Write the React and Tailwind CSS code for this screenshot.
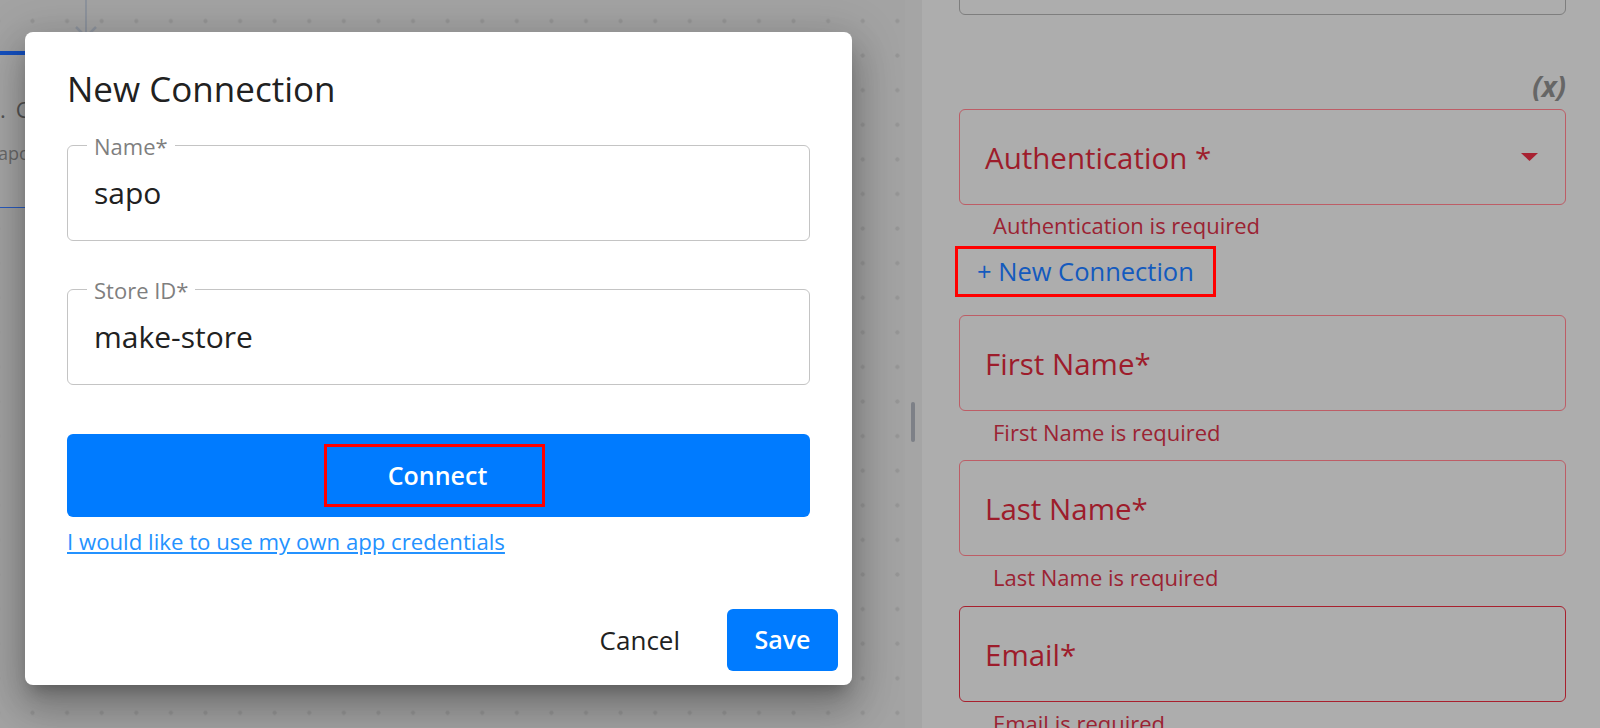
import React from 'react';

const dots =
    'bg-[radial-gradient(circle,#959595_1.8px,transparent_2.4px)] bg-[length:34.6px_34.6px] bg-[position:15.2px_3.7px]';

const OutlinedField = ({ label, value, className = '' }) => (
    <div className={`relative h-[96px] border border-[#c4c4c4] rounded-[6px] flex items-center pl-[26px] ${className}`}>
        <span className="absolute left-[19px] -top-[14px] px-[7px] bg-white text-[22px] leading-[28px] text-[#7f7f7f]">
            {label}
        </span>
        <span className="text-[30px] leading-[40px] text-[#212121]">{value}</span>
    </div>
);

const ErrorField = ({ label, select, className = '', border = 'border-[#bd5d66]' }) => (
    <div className={`h-[96px] border ${border} rounded-[6px] flex items-center justify-between pl-[25px] pr-[27px] pt-[2px] ${className}`}>
        <span className="text-[29.5px] leading-[38px] text-[#9d1c2b]">{label}</span>
        {select && (
            <svg width="17" height="8" viewBox="0 0 17 8" className="-mt-[2px]">
                <polygon points="0,0 17,0 8.5,8" fill="#a82232" />
            </svg>
        )}
    </div>
);

const Helper = ({ children, className = '' }) => (
    <p className={`pl-[34px] text-[22px] leading-[30px] text-[#9b2333] ${className}`}>{children}</p>
);

export default function App() {
    return (
        <div className="relative w-[1600px] h-[728px] overflow-hidden flex font-['Open_Sans',sans-serif]">
            {/* canvas */}
            <div className={`relative w-[905px] h-full bg-[#a3a3a3] ${dots}`}>
                <svg width="24" height="56" viewBox="0 0 24 56" className="absolute left-[74px] top-0">
                    <line x1="12" y1="0" x2="12" y2="48" stroke="#8d939c" strokeWidth="2" />
                    <polyline points="2,27 12,37 22,27" fill="none" stroke="#8d939c" strokeWidth="2.5" />
                </svg>
                <div className="absolute left-[-200px] top-[51px] w-[232px] h-[157px] overflow-hidden bg-[#a7a7a7] border-t-[4px] border-t-[#1450c0] border-b border-b-[#2a5cc0] pl-[187.5px] pt-[39px]">
                    <div className="text-[22px] leading-[30px] text-[#555] whitespace-nowrap">
                        <span>1.</span>
                        <span className="ml-[10px]">C</span>
                    </div>
                    <div className="mt-[17px] ml-[2px] text-[18px] leading-[24px] text-[#6a6a6a] whitespace-nowrap">sapo</div>
                </div>
            </div>

            {/* splitter */}
            <div className="w-[17px] h-full bg-[#a5a5a5] flex justify-center pt-[402px]">
                <div className="w-[4px] h-[40px] rounded-full bg-[#7d8087] -ml-[2px]" />
            </div>

            {/* right panel */}
            <div className="flex-1 h-full bg-[#adadad] pl-[37px] pr-[34px] overflow-hidden">
                <div className="h-[96px] -mt-[81px] border border-[#7e7e7e] rounded-[6px]" />
                <div className="h-[94px] flex items-end justify-end pb-[6px]">
                    <span className="text-[28px] leading-[34px] font-bold italic text-[#666]">(x)</span>
                </div>
                <ErrorField label="Authentication *" select />
                <Helper className="mt-[5px]">Authentication is required</Helper>
                <div className="mt-[6px] -ml-[4px] flex w-fit h-[51px] items-center border-[3px] border-[#ff0000] px-[19px] text-[25.5px] text-[#145abe]">
                    + New Connection
                </div>
                <ErrorField label="First Name*" className="mt-[18px]" />
                <Helper className="mt-[6px]">First Name is required</Helper>
                <ErrorField label="Last Name*" className="mt-[13px]" />
                <Helper className="mt-[6px]">Last Name is required</Helper>
                <ErrorField label="Email*" className="mt-[14px]" border="border-[#a8202e]" />
                <Helper className="mt-[6px]">Email is required</Helper>
            </div>

            {/* dialog */}
            <div className="absolute left-[25px] top-[32px] w-[827px] h-[653px] bg-white rounded-[8px] flex flex-col shadow-[0_11px_15px_-7px_rgba(0,0,0,0.25),0_24px_38px_3px_rgba(0,0,0,0.18),0_9px_46px_8px_rgba(0,0,0,0.15)]">
                <div className="px-[42px] pt-[34px]">
                    <h2 className="text-[35px] leading-[46px] text-[#212121]">New Connection</h2>
                    <OutlinedField label="Name*" value="sapo" className="mt-[33px]" />
                    <OutlinedField label="Store ID*" value="make-store" className="mt-[48px]" />
                    <button className="mt-[49px] w-full h-[83px] bg-[#007bff] rounded-[6px] flex items-center justify-center">
                        <span className="mr-[8px] h-[63px] flex items-center border-[3px] border-[#ff0000] pl-[61px] pr-[55px] text-[25px] font-semibold text-white">
                            Connect
                        </span>
                    </button>
                    <a href="#" className="inline-block mt-[10px] text-[22.2px] leading-[30px] text-[#2492ff] underline">
                        I would like to use my own app credentials
                    </a>
                </div>
                <div className="mt-auto flex justify-end items-center gap-[25px] p-[14px]">
                    <button className="h-[62px] px-[22px] text-[26px] text-[#212121]">Cancel</button>
                    <button className="h-[62px] w-[111px] bg-[#007bff] rounded-[6px] text-[25px] font-semibold text-white">
                        Save
                    </button>
                </div>
            </div>
        </div>
    );
}
